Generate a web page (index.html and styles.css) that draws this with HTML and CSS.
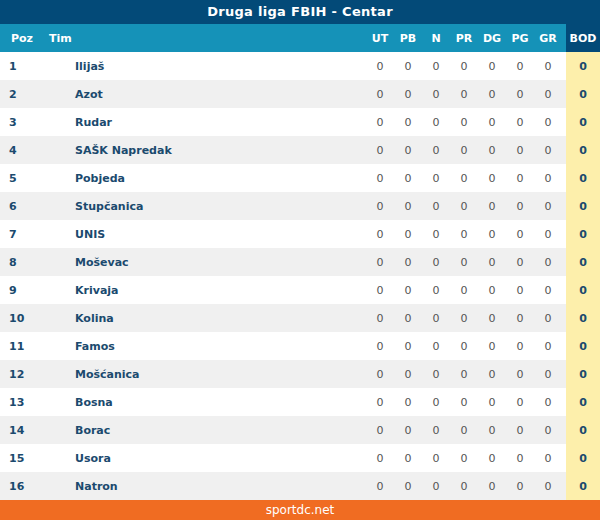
FILE: index.html
```html
<!DOCTYPE html>
<html>
<head>
<meta charset="utf-8">
<link rel="stylesheet" href="styles.css">
</head>
<body>
<div class="widget">
  <div class="title">Druga liga FBIH - Centar</div>
  <div class="row head">
    <div class="poz">Poz</div><div class="tim">Tim</div>
    <div class="st">UT</div><div class="st">PB</div><div class="st">N</div><div class="st">PR</div><div class="st">DG</div><div class="st">PG</div><div class="st">GR</div><div class="gap"></div><div class="bod">BOD</div>
  </div>
  <div id="rows"></div>
  <div class="footer">sportdc.net</div>
</div>
<script>
const teams=["Ilijaš","Azot","Rudar","SAŠK Napredak","Pobjeda","Stupčanica","UNIS","Moševac","Krivaja","Kolina","Famos","Mošćanica","Bosna","Borac","Usora","Natron"];
const c=document.getElementById('rows');
teams.forEach((t,i)=>{
  const r=document.createElement('div');
  r.className='row'+(i%2?' alt':'');
  let h='<div class="poz">'+(i+1)+'</div><div class="tim">'+t+'</div>';
  for(let k=0;k<7;k++)h+='<div class="st">0</div>';
  h+='<div class="gap"></div><div class="bod">0</div>';
  r.innerHTML=h;c.appendChild(r);
});
</script>
</body>
</html>
```
FILE: styles.css
```css
html,body{margin:0;padding:0;background:#fff;}
.widget{width:600px;font-family:"DejaVu Sans",Verdana,sans-serif;font-size:11px;}
.title{height:24px;line-height:24px;background:#034a78;color:#fff;text-align:center;font-weight:bold;font-size:13px;letter-spacing:0.3px;}
.row{display:grid;grid-template-columns:49px 317px repeat(7,28px) 4px 34px;height:28px;align-items:center;background:#fff;}
.row.alt{background:#f0f0f0;}
.row>div{height:28px;line-height:29px;}
.poz{padding-left:9px;font-weight:bold;color:#1b4a6e;}
.tim{padding-left:26px;font-weight:bold;color:#1b4a6e;}
.st{text-align:center;color:#555;}
.bod{text-align:center;font-weight:bold;color:#1b4a6e;background:#fdefab;}
.head{background:#1592b8;}
.head>div{color:#fff;font-weight:bold;}
.head .poz{padding-left:11px;}
.head .tim{padding-left:0;}
.head .bod{background:#034a78;color:#fff;}
.footer{height:20px;line-height:20px;background:#f06c22;color:#fff;text-align:center;font-size:12px;}
```
